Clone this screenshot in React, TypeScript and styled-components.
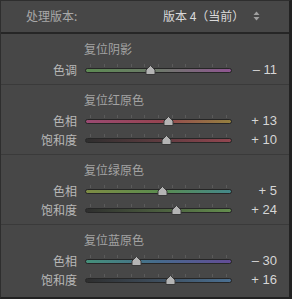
import * as React from 'react'
import styled, { createGlobalStyle } from 'styled-components'

const GlobalStyle = createGlobalStyle`
  html, body {
    margin: 0;
    padding: 0;
    background: #474747;
  }
  body {
    font-family: "Noto Sans CJK SC", "Liberation Sans", sans-serif;
  }
`

interface SliderData {
  label: string
  value: number
  gradient: string
}

interface SectionData {
  title: string
  sliders: SliderData[]
}

const sections: SectionData[] = [
  {
    title: '复位阴影',
    sliders: [
      { label: '色调', value: -11, gradient: 'linear-gradient(90deg, #5c8a52, #6d786a 50%, #8f5591)' }
    ]
  },
  {
    title: '复位红原色',
    sliders: [
      { label: '色相', value: 13, gradient: 'linear-gradient(90deg, #9a4a72, #964452 50%, #94803f)' },
      { label: '饱和度', value: 10, gradient: 'linear-gradient(90deg, #2e2e2e, #54393c 40%, #924650)' }
    ]
  },
  {
    title: '复位绿原色',
    sliders: [
      { label: '色相', value: 5, gradient: 'linear-gradient(90deg, #7e8c44, #5b8c4e 50%, #44888a)' },
      { label: '饱和度', value: 24, gradient: 'linear-gradient(90deg, #2e2e2e, #45533b 40%, #648e4e)' }
    ]
  },
  {
    title: '复位蓝原色',
    sliders: [
      { label: '色相', value: -30, gradient: 'linear-gradient(90deg, #45907a, #466a8c 50%, #634c96)' },
      { label: '饱和度', value: 16, gradient: 'linear-gradient(90deg, #2e2e2e, #3b4753 40%, #4b7092)' }
    ]
  }
]

function formatValue(v: number) {
  return v < 0 ? `– ${Math.abs(v)}` : `+ ${v}`
}

function Slider({ label, value, gradient }: SliderData) {
  const pct = ((value + 100) / 200) * 100
  return (
    <Row>
      <Label>{label}</Label>
      <TrackWrap>
        <Ticks>
          {Array.from({ length: 11 }).map((_, i) => (
            <Tick key={i} />
          ))}
        </Ticks>
        <Track background={gradient} />
        <Thumb style={{ left: `${pct}%` }}>
          <svg width="11" height="10" viewBox="0 0 11 10">
            <path
              d="M5.5 0.5 L10 5 L10 9.5 L1 9.5 L1 5 Z"
              fill="#b4b4b4"
              stroke="#3a3a3a"
              strokeWidth="1"
            />
          </svg>
        </Thumb>
      </TrackWrap>
      <Value>{formatValue(value)}</Value>
    </Row>
  )
}

export default function App() {
  return (
    <>
      <GlobalStyle />
      <Panel>
        <Header>
          <HeaderLabel>处理版本:</HeaderLabel>
          <Select>
            <span>版本 4（当前）</span>
            <svg width="7" height="10" viewBox="0 0 7 10">
              <path d="M3.5 0.5 L6.5 4 L0.5 4 Z" fill="#a0a0a0" />
              <path d="M3.5 9.5 L6.5 6 L0.5 6 Z" fill="#a0a0a0" />
            </svg>
          </Select>
        </Header>
        {sections.map((s) => (
          <Section key={s.title}>
            <Title>{s.title}</Title>
            <Rows>
              {s.sliders.map((sl, i) => (
                <Slider key={i} {...sl} />
              ))}
            </Rows>
          </Section>
        ))}
      </Panel>
    </>
  )
}

const Panel = styled.div`
  width: 292px;
  height: 299px;
  box-sizing: border-box;
  border-top: 1px solid #2e2e2e;
  border-left: 1px solid #2e2e2e;
  border-right: 3px solid #222;
  border-bottom: 2px solid #222;
  background: #474747;
  display: flex;
  flex-direction: column;
`

const Header = styled.div`
  height: 33px;
  box-sizing: border-box;
  padding: 0 0 3px 25px;
  display: flex;
  align-items: center;
  border-bottom: 2px solid #262626;
  font-size: 12px;
`

const HeaderLabel = styled.div`
  color: #a9a9a9;
  width: 137px;
`

const Select = styled.div`
  display: flex;
  align-items: center;
  gap: 9px;
  color: #dadada;
  svg {
    margin-top: 1px;
  }
`

const Section = styled.div`
  box-sizing: border-box;
  padding: 6px 0 5px;
  border-bottom: 1px solid #3a3a3a;
  &:last-child {
    border-bottom: none;
  }
`

const Title = styled.div`
  height: 18px;
  line-height: 18px;
  padding-left: 83px;
  font-size: 12px;
  color: #a3a3a3;
`

const Rows = styled.div`
  margin-top: 2px;
  display: flex;
  flex-direction: column;
`

const Row = styled.div`
  height: 19px;
  display: grid;
  grid-template-columns: 76px 155px 45px;
  align-items: center;
`

const Label = styled.div`
  text-align: right;
  font-size: 12px;
  color: #b8b8b8;
  white-space: nowrap;
`

const TrackWrap = styled.div`
  position: relative;
  height: 19px;
  margin-left: 8px;
`

const Ticks = styled.div`
  position: absolute;
  left: 5px;
  right: 5px;
  top: 4px;
  display: flex;
  justify-content: space-between;
`

const Tick = styled.div`
  width: 1px;
  height: 3px;
  background: #5a5a5a;
`

const Track = styled.div<{ background: string }>`
  position: absolute;
  left: 0;
  right: 0;
  top: 8px;
  height: 3px;
  border: 1px solid #262626;
  border-radius: 3px;
  background: ${({ background }) => background};
`

const Thumb = styled.div`
  position: absolute;
  top: 5px;
  width: 11px;
  height: 10px;
  margin-left: -5px;
  svg {
    display: block;
  }
`

const Value = styled.div`
  text-align: right;
  color: #d6d6d6;
  font-family: "Liberation Sans", sans-serif;
  font-size: 13px;
`
